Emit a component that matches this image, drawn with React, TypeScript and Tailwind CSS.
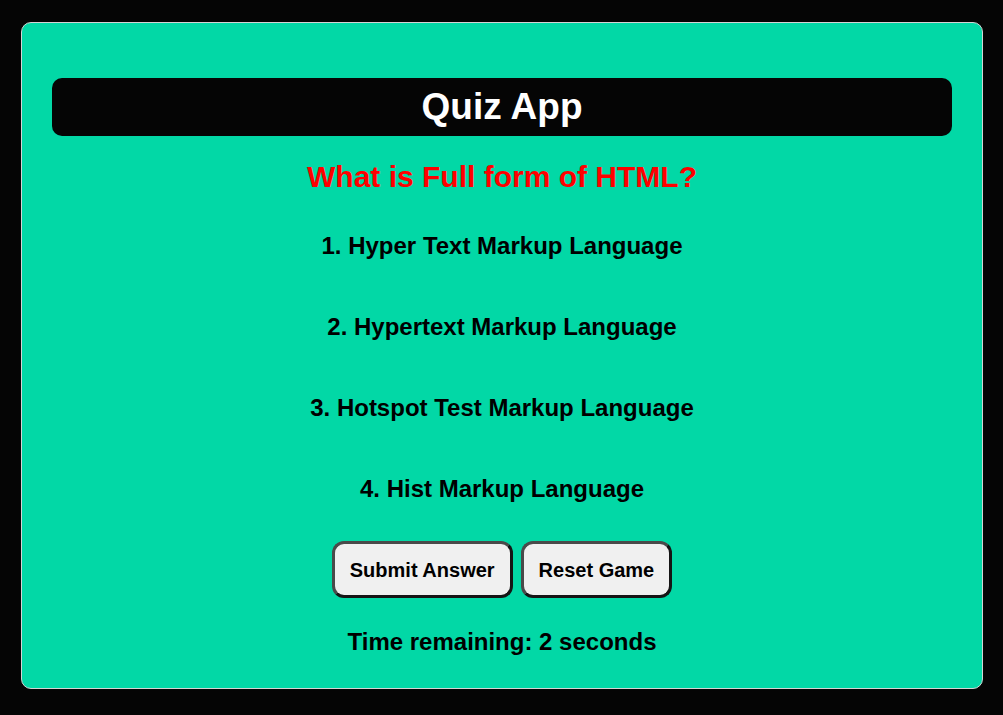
const options = [
  "1. Hyper Text Markup Language",
  "2. Hypertext Markup Language",
  "3. Hotspot Test Markup Language",
  "4. Hist Markup Language",
];

export default function App() {
  return (
    <div className="min-h-[715px] bg-[#050505] pt-[22px] pl-[21px] font-['Liberation_Sans',Arial,sans-serif]">
      {/* Card */}
      <div className="w-[962px] rounded-[10px] border border-[#d4d4d4] bg-[#02d8a6] px-[30px] pt-[55px] pb-[32px]">
        {/* Header */}
        <div className="flex h-[58px] items-center justify-center rounded-[10px] bg-[#050505]">
          <h1 className="text-[37px] font-bold leading-[40px] text-white">Quiz App</h1>
        </div>

        {/* Question */}
        <h2 className="mt-[24px] text-center text-[30px] font-bold leading-[34px] text-[#ff0000]">
          What is Full form of HTML?
        </h2>

        {/* Options */}
        <div className="mt-[38px] flex flex-col gap-[53px]">
          {options.map((opt) => (
            <p key={opt} className="text-center text-[24px] font-bold leading-[28px] text-black">
              {opt}
            </p>
          ))}
        </div>

        {/* Buttons */}
        <div className="mt-[38px] flex justify-center gap-[8px]">
          <button className="h-[57px] rounded-[12px] border-[3px] border-[#4a4a4a] border-b-[#151515] border-r-[#151515] bg-[#f0f0f0] px-[15px] text-[20px] font-bold text-black">
            Submit Answer
          </button>
          <button className="h-[57px] rounded-[12px] border-[3px] border-[#4a4a4a] border-b-[#151515] border-r-[#151515] bg-[#f0f0f0] px-[15px] text-[20px] font-bold text-black">
            Reset Game
          </button>
        </div>

        {/* Timer */}
        <p className="mt-[30px] text-center text-[24px] font-bold leading-[28px] text-black">
          Time remaining: 2 seconds
        </p>
      </div>
    </div>
  );
}
